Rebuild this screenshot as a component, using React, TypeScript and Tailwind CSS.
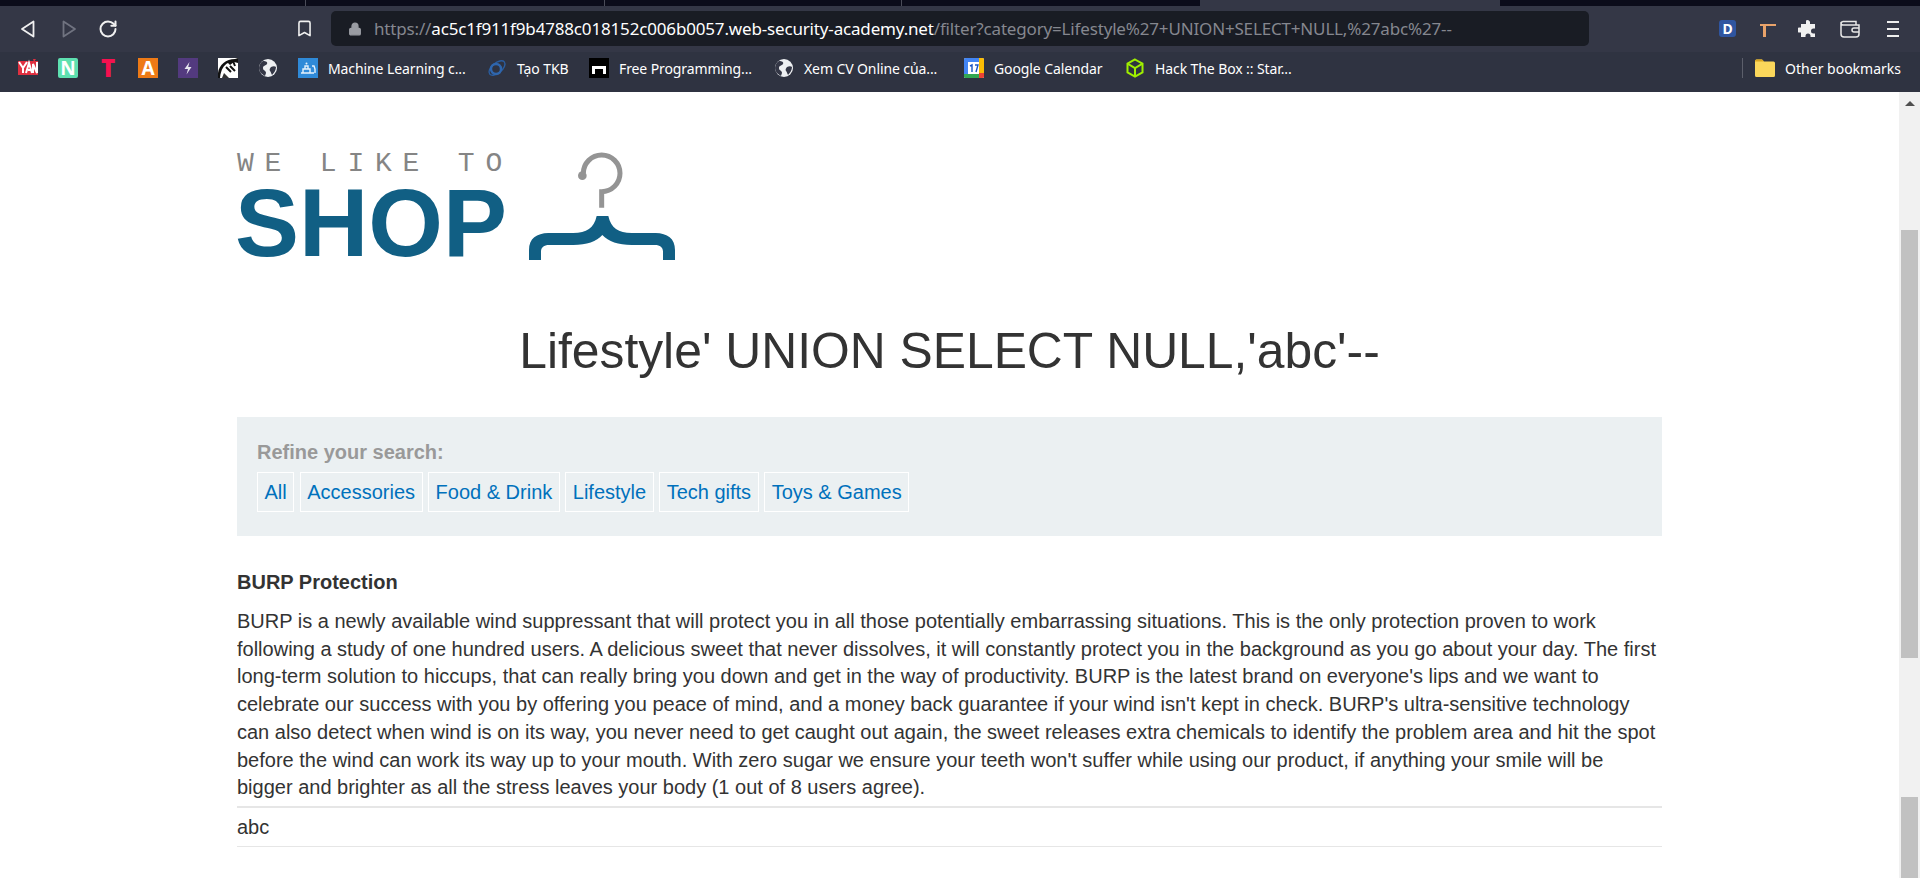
import React from "react";
import { Bookmark, Lock, RotateCw } from "lucide-react";

const Globe = () => (
  <svg width="20" height="20" viewBox="0 0 20 20">
    <circle cx="10" cy="10" r="9" fill="#eef0f2" />
    <path d="M5 3c3 0 5 1 4 3s-4 1-4 4 3 2 3 5l-1 3C3 16 1 13 1 10c0-3 2-6 4-7zM13 9c2-1 4-1 5 0 0 3-2 6-4 8-1-2-1-3-2-4s0-3 1-4z" fill="#343746" />
  </svg>
);

const YanIcon = () => (
  <svg width="20" height="20" viewBox="0 0 20 20">
    <rect x="0" y="3" width="20" height="14" fill="#e03040" />
    <path d="M1 4l4 6v5M9 4L5 10M8 15l3-10 3 10M10 12h3M15 15V6l4 9V4" stroke="#fff" strokeWidth="2" fill="none" />
    <path d="M15 1l3 0-2 3z" fill="#e03040" />
  </svg>
);

const LetterIcon = ({ bg, children, round }: { bg: string; children: React.ReactNode; round?: boolean }) => (
  <span className={`flex h-5 w-5 items-center justify-center text-[19px] leading-none font-bold text-white ${bg} ${round ? "rounded-[2px]" : ""}`}>{children}</span>
);

const Bolt = () => (
  <svg width="20" height="20" viewBox="0 0 20 20">
    <rect width="20" height="20" fill="#533a7f" />
    <path d="M11.5 4L6.5 11H10L8.5 16.5L13.5 9H10.2Z" fill="#e6e4ee" />
  </svg>
);

const Knight = () => (
  <svg width="20" height="20" viewBox="0 0 20 20">
    <rect width="20" height="20" fill="#fff" />
    <path d="M0 15C1 7 8 1 17 1L20 0V5L16 4L12 7L10 5C6 7 3 11 2 20H0Z" fill="#111" />
    <path d="M8 9L13 14M12 8L17 13M15 3L17 8" stroke="#111" strokeWidth="2" />
    <path d="M4 20L6 15L11 20Z" fill="#333" />
  </svg>
);

const MlIcon = () => (
  <svg width="20" height="20" viewBox="0 0 20 20">
    <rect width="20" height="20" fill="#2f8ad8" />
    <path d="M3 15h13M5 15v-4h7v4M7 11V8h3v3M14 8h2l1 3v4" stroke="#e5f1fb" strokeWidth="1.4" fill="none" />
    <circle cx="8.5" cy="5.5" r="1" fill="#e5f1fb" />
  </svg>
);

const EdgeIcon = () => (
  <svg width="20" height="20" viewBox="0 0 20 20" fill="none">
    <ellipse cx="10" cy="10" rx="9.5" ry="5" transform="rotate(-40 10 10)" stroke="#2a5d9f" strokeWidth="1.4" />
    <circle cx="9" cy="11" r="5" stroke="#2f66ad" strokeWidth="2.4" />
  </svg>
);

const FreeIcon = () => (
  <svg width="20" height="20" viewBox="0 0 20 20">
    <rect width="20" height="20" fill="#000" />
    <path d="M3 16V8h14v8h-3v-5H6v5z" fill="#fff" />
  </svg>
);

const CalIcon = () => (
  <svg width="20" height="20" viewBox="0 0 20 20">
    <rect width="20" height="20" rx="1.5" fill="#fff" />
    <path d="M0 1.5A1.5 1.5 0 0 1 1.5 0H15v4H0z" fill="#4285f4" />
    <path d="M0 4h4v12H0z" fill="#4285f4" />
    <path d="M0 16h15v4H1.5A1.5 1.5 0 0 1 0 18.5z" fill="#34a853" />
    <path d="M15 0h3.5A1.5 1.5 0 0 1 20 1.5V15h-5z" fill="#fbbc04" />
    <path d="M15 15h5v3.5a1.5 1.5 0 0 1-1.5 1.5H15z" fill="#ea4335" />
    <path d="M6 8l2-1v7M11 7h3l-2 7" stroke="#1a56c4" strokeWidth="1.4" fill="none" />
  </svg>
);

const BoxIcon = () => (
  <svg width="20" height="20" viewBox="0 0 20 20" fill="none" stroke="#9fef00" strokeWidth="2">
    <path d="M10 1.5L17.5 5.7V14.3L10 18.5L2.5 14.3V5.7Z" />
    <path d="M2.5 5.7L10 10L17.5 5.7M10 10V18.5" />
  </svg>
);

const Folder = () => (
  <svg width="20" height="18" viewBox="0 0 20 18">
    <path d="M0 2a1.5 1.5 0 0 1 1.5-1.5H7L9 2.5h9.5A1.5 1.5 0 0 1 20 4v12.5a1.5 1.5 0 0 1-1.5 1.5h-17A1.5 1.5 0 0 1 0 16.500z" fill="#fbd75b" />
    <path d="M0 2a1.5 1.500 0 0 1 1.500-1.500H7L9 2.500H0z" fill="#d9a520" />
  </svg>
);

const Hanger = () => (
  <svg width="146" height="110" viewBox="927 60 438 330" className="mt-[3px] ml-[24px] shrink-0">
    <path d="M1090 130A55 55 0 1 1 1145 185V233" fill="none" stroke="#949494" strokeWidth="15" />
    <circle cx="1087" cy="137" r="13" fill="#949494" />
    <path d="M927 390V360C927 325 950 310 985 309H1060C1100 308 1122 295 1130 258H1165C1173 295 1195 308 1235 309H1307C1342 310 1365 325 1365 360V390H1329V365C1329 352 1320 345 1305 345H1235C1195 345 1165 335 1147 315C1130 335 1100 345 1060 345H987C972 345 963 352 963 365V390Z" fill="#115f84" />
  </svg>
);

const filters = ["All", "Accessories", "Food & Drink", "Lifestyle", "Tech gifts", "Toys & Games"];

export default function App() {
  return (
    <div className="flex h-[878px] w-full flex-col overflow-hidden bg-white font-['Liberation_Sans',Arial,sans-serif]">
      {/* tab strip */}
      <div className="flex h-[6px] bg-[#343746]">
        <div className="h-full w-[305px] bg-[#0b0c1a]" />
        <div className="h-full w-[299px] border-l border-[#4a4c58] bg-[#0b0c1a]" />
        <div className="h-full w-[297px] border-l border-[#4a4c58] bg-[#0b0c1a]" />
        <div className="h-full w-[299px] border-l border-[#4a4c58] bg-[#0b0c1a]" />
        <div className="w-[300px]" />
        <div className="h-full flex-1 bg-[#0b0c1a]" />
      </div>

      {/* toolbar */}
      <div className="flex h-[46px] items-start bg-[#343746] pt-[5px] font-['Noto_Sans',sans-serif]">
        <div className="flex h-[35px] w-[331px] shrink-0 items-center">
          <svg width="16" height="18" viewBox="0 0 16 18" fill="none" stroke="#f0f0f0" strokeWidth="1.8" className="ml-[20px]">
            <path d="M13.500 1.500V16.500L2 9Z" strokeLinejoin="round" />
          </svg>
          <svg width="16" height="18" viewBox="0 0 16 18" fill="none" stroke="#707380" strokeWidth="1.8" className="ml-[25px]">
            <path d="M2.500 1.500V16.500L14 9Z" strokeLinejoin="round" />
          </svg>
          <RotateCw size={20} color="#f0f0f0" strokeWidth={2.4} className="ml-[21px]" />
          <Bookmark size={19} color="#f0f0f0" strokeWidth={2} className="ml-[177px]" />
        </div>
        <div className="flex h-[35px] w-[1258px] shrink-0 items-center rounded-[5px] bg-[#191c24] text-[17px] whitespace-nowrap">
          <Lock size={14} fill="#9a9ca3" color="#9a9ca3" strokeWidth={2.4} className="ml-[17px]" />
          <span className="ml-[12px] tracking-[-0.165px]">
            <span className="text-[#85878f]">https://</span>
            <span className="text-white">ac5c1f911f9b4788c018152c006b0057.web-security-academy.net</span>
            <span className="text-[#85878f]">/filter?category=Lifestyle%27+UNION+SELECT+NULL,%27abc%27--</span>
          </span>
        </div>
        <div className="flex h-[35px] flex-1 items-center">
          <span className="ml-[130px] flex h-[17px] w-[17px] items-center justify-center rounded-[3px] bg-[#2f55a0] text-[14px] font-bold text-white">D</span>
          <svg width="18" height="18" viewBox="0 0 18 18" className="ml-[23px]">
            <path d="M1 4h16v2H7v11H4V6H1z" fill="#e8a26a" />
          </svg>
          <svg width="20" height="20" viewBox="0 0 20 20" className="ml-[21px]">
            <path d="M8 1.500a2.500 2.500 0 0 1 4 1.500V5h5v4.500h-1.500a2.500 2.500 0 0 0 0 5H17V18H12.500v-1a2.500 2.500 0 0 0-5 0v1H3v-4.500H1.500a2.500 2.500 0 0 1 0-5H3V5h5z" fill="#f0f0f0" />
          </svg>
          <svg width="20" height="18" viewBox="0 0 20 18" fill="none" stroke="#e8e8e8" strokeWidth="1.500" className="ml-[22px]">
            <path d="M3 1.500H16V5M1 4a2.500 2.500 0 0 1 2-2.500M1 4V14a3 3 0 0 0 3 3H16a3 3 0 0 0 3-3V5H3.500A2.500 2.500 0 0 1 1 4Z" />
            <path d="M19 8H14a2 2 0 0 0 0 4H19" />
          </svg>
          <div className="ml-[27px] flex w-[12px] flex-col gap-[5px]">
            <span className="h-[2px] bg-[#eeeeee]" />
            <span className="h-[2px] bg-[#eeeeee]" />
            <span className="h-[2px] bg-[#eeeeee]" />
          </div>
        </div>
      </div>

      {/* bookmarks */}
      <div className="flex h-[40px] items-start bg-[#2f3341] pt-[1px] pl-[18px] font-['Noto_Sans',sans-serif] text-[14px] whitespace-nowrap text-white">
        <div className="flex h-[30px] items-center gap-[20px] tracking-[-0.1px]">
          <YanIcon />
          <LetterIcon bg="bg-[#5ee0b0]" round>N</LetterIcon>
          <span className="flex h-5 w-5 items-center justify-center text-[24px] leading-none font-black text-[#f5114f]">T</span>
          <LetterIcon bg="bg-[#ee7a16]">A</LetterIcon>
          <Bolt />
          <Knight />
          <Globe />
          <span className="flex w-[169px] items-center gap-[10px]"><MlIcon />Machine Learning c...</span>
          <span className="flex w-[82px] items-center gap-[10px]"><EdgeIcon />Tạo TKB</span>
          <span className="flex w-[165px] items-center gap-[10px]"><FreeIcon />Free Programming...</span>
          <span className="flex w-[170px] items-center gap-[10px]"><Globe />Xem CV Online của...</span>
          <span className="flex w-[141px] items-center gap-[10px]"><CalIcon />Google Calendar</span>
          <span className="flex w-[169px] items-center gap-[10px]"><BoxIcon />Hack The Box :: Star...</span>
        </div>
        <div className="ml-auto flex h-[30px] items-center pr-[19px]">
          <span className="mr-[12px] h-[20px] w-px bg-[#5c5f6b]" />
          <span className="flex items-center gap-[10px]"><Folder />Other bookmarks</span>
        </div>
      </div>

      {/* page */}
      <div className="flex min-h-0 flex-1">
        <div className="min-w-0 flex-1 overflow-hidden pr-[237px] pl-[237px] text-[20px] leading-[27.7px] text-[#333333]">
          <div className="flex items-start pt-[55px]">
            <div className="w-[268px] shrink-0">
              <div className="h-[38px] font-['Liberation_Mono',monospace] text-[28px] leading-[34px] tracking-[10.8px] whitespace-nowrap text-[#858585]">WE LIKE TO</div>
              <div className="-ml-[2px] h-[76px] text-[96px] leading-[76px] font-bold text-[#115f84]">SHOP</div>
            </div>
            <Hanger />
          </div>
          <h1 className="mt-[51px] text-center text-[49.8px] leading-[78px] text-[#333333]">Lifestyle' UNION SELECT NULL,'abc'--</h1>
          <section className="mt-[27px] h-[119px] bg-[#ebf0f2] px-[20px] pt-[21px]">
            <div className="leading-[28px] font-bold text-[#999999]">Refine your search:</div>
            <div className="mt-[6px] flex gap-[5.5px]">
              {filters.map((f) => (
                <a key={f} className="border border-white px-[6.5px] leading-[38px] whitespace-nowrap text-[#0071bc]">{f}</a>
              ))}
            </div>
          </section>
          <h3 className="mt-[33px] leading-[27px] font-bold text-[#333333]">BURP Protection</h3>
          <div className="mt-[12px] h-[190px] overflow-hidden pt-[0px]">
            <p>BURP is a newly available wind suppressant that will protect you in all those potentially embarrassing situations. This is the only protection proven to work following a study of one hundred users. A delicious sweet that never dissolves, it will constantly protect you in the background as you go about your day. The first long-term solution to hiccups, that can really bring you down and get in the way of productivity. BURP is the latest brand on everyone's lips and we want to celebrate our success with you by offering you peace of mind, and a money back guarantee if your wind isn't kept in check. BURP's ultra-sensitive technology can also detect when wind is on its way, you never need to get caught out again, the sweet releases extra chemicals to identify the problem area and hit the spot before the wind can work its way up to your mouth. With zero sugar we ensure your teeth won't suffer while using our product, if anything your smile will be bigger and brighter as all the stress leaves your body (1 out of 8 users agree).</p>
          </div>
          <div className="mt-[8px] border-t-2 border-b border-t-[#e6e6e6] border-b-[#e6e6e6] leading-[38px]">abc</div>
        </div>

        {/* scrollbar */}
        <div className="flex w-[21px] shrink-0 flex-col bg-[#f1f1f1] pr-[2px] pl-[2px]">
          <div className="flex h-[138px] justify-center pt-[9px]">
            <span className="h-0 w-0 border-x-[5px] border-b-[5px] border-x-transparent border-b-[#505050]" />
          </div>
          <div className="h-[428px] bg-[#c1c1c1]" />
          <div className="mt-[139px] flex-1 bg-[#c1c1c1]" />
        </div>
      </div>
    </div>
  );
}
